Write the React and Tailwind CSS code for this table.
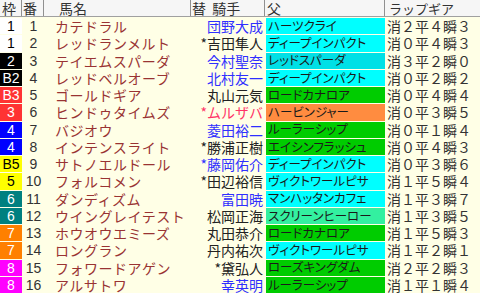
import React from 'react';

const frameStyles = {
    1: 'bg-white text-black',
    2: 'bg-black text-white',
    3: 'bg-[#ff3333] text-white',
    4: 'bg-[#0000ff] text-white',
    5: 'bg-[#ffff00] text-black',
    6: 'bg-[#008080] text-white',
    7: 'bg-[#ff8000] text-white',
    8: 'bg-[#ff00ff] text-white',
};

const sireStyles = {
    cyan: 'bg-[#00ffff]',
    dcyan: 'bg-[#00e0e6]',
    green: 'bg-[#00cc00]',
    orange: 'bg-[#ff8c40]',
    aqua: 'bg-[#33f0a0]',
};

const jockeyStyles = {
    blue: 'text-[#2f2fff]',
    black: 'text-[#222]',
    red: 'text-[#ff3366]',
};

const horses = [
    { frame: 1, label: '1', no: 1, name: 'カテドラル', jockey: '団野大成', jc: 'blue', sire: 'ハーツクライ', sc: 'cyan', lap: '消２平４瞬３' },
    { frame: 1, label: '1', no: 2, name: 'レッドランメルト', jockey: '*吉田隼人', jc: 'black', sire: 'ディープインパクト', sc: 'cyan', lap: '消０平４瞬３' },
    { frame: 2, label: '2', no: 3, name: 'テイエムスパーダ', jockey: '今村聖奈', jc: 'blue', sire: 'レッドスパーダ', sc: 'dcyan', lap: '消３平２瞬０' },
    { frame: 2, label: 'B2', no: 4, name: 'レッドベルオーブ', jockey: '北村友一', jc: 'blue', sire: 'ディープインパクト', sc: 'cyan', lap: '消０平２瞬２' },
    { frame: 3, label: 'B3', no: 5, name: 'ゴールドギア', jockey: '丸山元気', jc: 'black', sire: 'ロードカナロア', sc: 'green', lap: '消０平４瞬４' },
    { frame: 3, label: '3', no: 6, name: 'ヒンドゥタイムズ', jockey: '*ムルザバ', jc: 'red', sire: 'ハービンジャー', sc: 'orange', lap: '消０平３瞬５' },
    { frame: 4, label: '4', no: 7, name: 'バジオウ', jockey: '菱田裕二', jc: 'blue', sire: 'ルーラーシップ', sc: 'green', lap: '消０平１瞬４' },
    { frame: 4, label: '4', no: 8, name: 'インテンスライト', jockey: '*勝浦正樹', jc: 'black', sire: 'エイシンフラッシュ', sc: 'green', lap: '消０平４瞬３' },
    { frame: 5, label: 'B5', no: 9, name: 'サトノエルドール', jockey: '*藤岡佑介', jc: 'blue', sire: 'ディープインパクト', sc: 'cyan', lap: '消０平３瞬６' },
    { frame: 5, label: '5', no: 10, name: 'フォルコメン', jockey: '*田辺裕信', jc: 'black', sire: 'ヴィクトワールピサ', sc: 'cyan', lap: '消１平５瞬４' },
    { frame: 6, label: '6', no: 11, name: 'ダンディズム', jockey: '富田暁', jc: 'blue', sire: 'マンハッタンカフェ', sc: 'cyan', lap: '消１平３瞬７' },
    { frame: 6, label: '6', no: 12, name: 'ウイングレイテスト', jockey: '松岡正海', jc: 'black', sire: 'スクリーンヒーロー', sc: 'aqua', lap: '消１平３瞬５' },
    { frame: 7, label: '7', no: 13, name: 'ホウオウエミーズ', jockey: '丸田恭介', jc: 'black', sire: 'ロードカナロア', sc: 'green', lap: '消１平５瞬３' },
    { frame: 7, label: '7', no: 14, name: 'ロングラン', jockey: '丹内祐次', jc: 'black', sire: 'ヴィクトワールピサ', sc: 'cyan', lap: '消１平２瞬１' },
    { frame: 8, label: '8', no: 15, name: 'フォワードアゲン', jockey: '*黛弘人', jc: 'black', sire: 'ローズキングダム', sc: 'green', lap: '消２平２瞬３' },
    { frame: 8, label: '8', no: 16, name: 'アルサトワ', jockey: '幸英明', jc: 'blue', sire: 'ルーラーシップ', sc: 'green', lap: '消１平１瞬４' },
];

const jp = { fontFamily: '"Noto Sans CJK JP", sans-serif' };
const num = { fontFamily: '"Liberation Sans", "Noto Sans CJK JP", sans-serif' };

const cols = 'grid grid-cols-[22px_21px_146px_73px_119px_94px] gap-x-px';

const App = () => {
    return (
        <div className="w-[480px] h-[293px] bg-[#ffffe6] flex flex-col overflow-hidden" style={jp}>
            {/* header */}
            <div className={`${cols} h-[17px] bg-[#f6f6f6] border-b border-[#a0a0a0] text-[14px] leading-none text-[#333]`}>
                <div className="flex items-center border-r border-[#909090] pl-[2px]">枠</div>
                <div className="flex items-center border-r border-[#909090] pl-[1px] -ml-px">番</div>
                <div className="flex items-center border-r border-[#909090] pl-[15px] -ml-px">馬名</div>
                <div className="flex items-center border-r border-[#909090] pl-[1px] -ml-px whitespace-nowrap">替&nbsp;&nbsp;騎手</div>
                <div className="flex items-center border-r border-[#909090] pl-[2px] -ml-px">父</div>
                <div className="flex items-center pl-[4px] -ml-px text-[13px]">ラップギア</div>
            </div>

            {/* rows */}
            <div className="flex-1 flex flex-col gap-y-px pt-px">
                {horses.map((h) => (
                    <div key={h.no} className={`${cols} flex-1 min-h-0`}>
                        <div className={`${frameStyles[h.frame]} flex items-center justify-center text-[14px] leading-none`} style={num}>
                            {h.label}
                        </div>
                        <div className="flex items-center justify-center text-[14px] leading-none text-[#333]" style={num}>
                            {h.no}
                        </div>
                        <div className="flex items-center pl-[10px] text-[14px] leading-none tracking-[0.5px] text-[#993333] whitespace-nowrap">
                            {h.name}
                        </div>
                        <div className={`${jockeyStyles[h.jc]} flex items-center justify-end pr-[2px] text-[14px] leading-none whitespace-nowrap`}>
                            {h.jockey}
                        </div>
                        <div className={`${sireStyles[h.sc]} flex items-center pl-[2px] text-[12.5px] leading-none text-[#1a1a1a] whitespace-nowrap`} style={{ fontFeatureSettings: '"palt"' }}>
                            {h.sire}
                        </div>
                        <div className="flex items-center pl-[1px] text-[14px] leading-none text-[#333] whitespace-nowrap">
                            {h.lap}
                        </div>
                    </div>
                ))}
            </div>
        </div>
    );
};

export default App;
